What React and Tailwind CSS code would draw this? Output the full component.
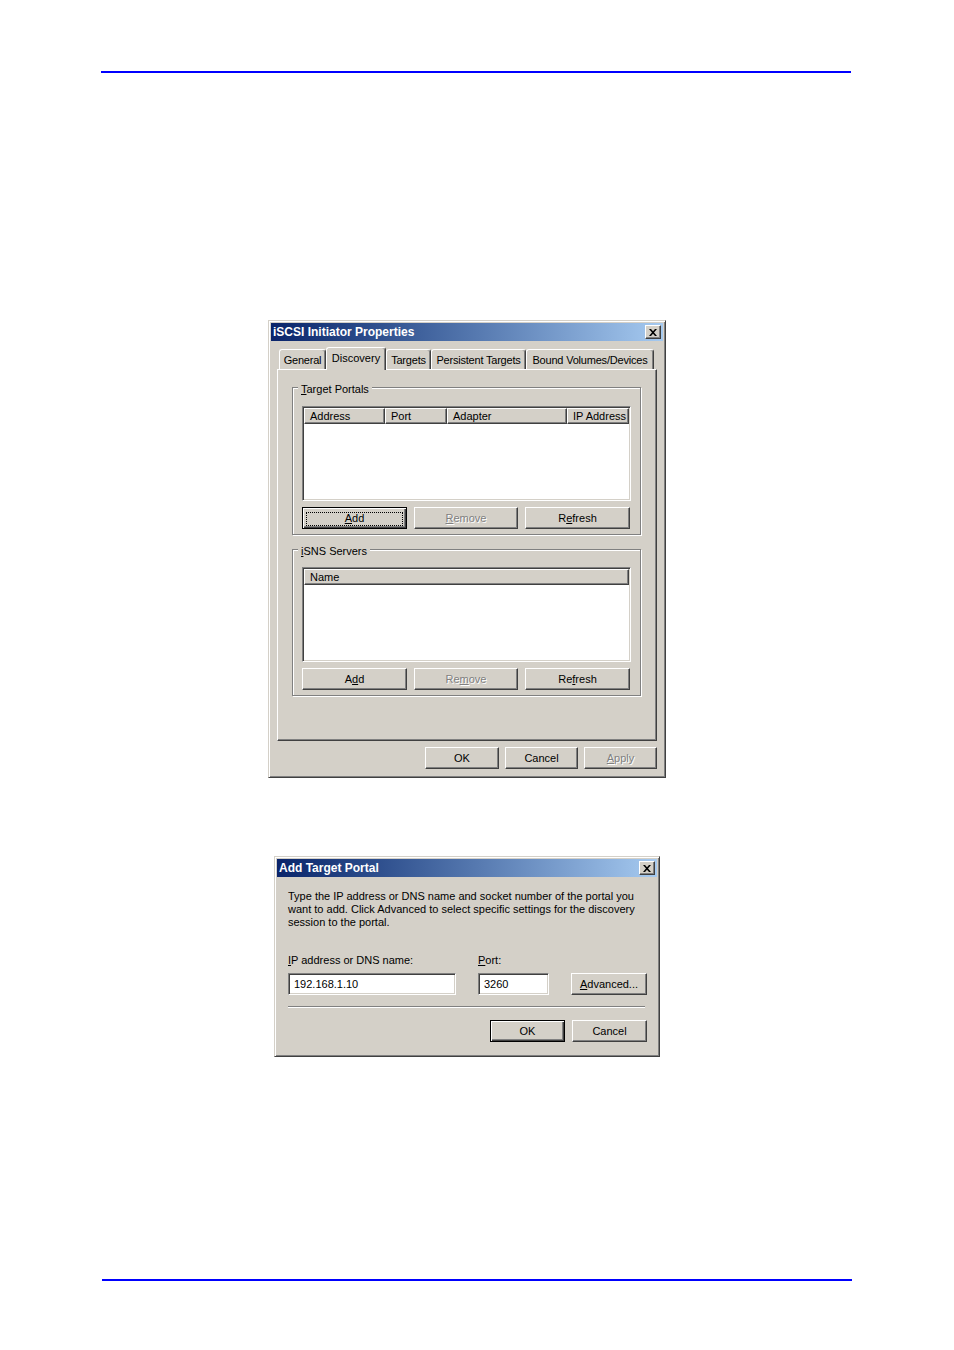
import React from 'react'

// Classic Windows 2000 look: #d4d0c8 face, white / #808080 / #404040 bevels
const RAISED =
  'border border-t-white border-l-white border-r-[#404040] border-b-[#404040] shadow-[inset_-1px_-1px_0_#808080]'
const SUNKEN =
  'border border-t-[#808080] border-l-[#808080] border-r-white border-b-white shadow-[inset_1px_1px_0_#404040,inset_-1px_-1px_0_#d4d0c8]'
const DISABLED = 'text-[#808080] [text-shadow:1px_1px_0_#fff]'

function U({ children }) {
  return <span className="underline decoration-1 underline-offset-[1px]">{children}</span>
}

function CloseBox() {
  return (
    <div className={`mr-[2px] flex h-[14px] w-[16px] items-center justify-center bg-[#d4d0c8] ${RAISED}`}>
      <svg width="8" height="7" viewBox="0 0 8 7">
        <path d="M0 0h2l2 2.2L6 0h2L5 3.5 8 7H6L4 4.8 2 7H0l3-3.5z" fill="#000" />
      </svg>
    </div>
  )
}

function TitleBar({ title }) {
  return (
    <div className="flex h-[18px] items-center justify-between bg-gradient-to-r from-[#0a246a] to-[#a6caf0] pl-[2px]">
      <span className="text-[12px] font-bold leading-[14px] text-white">{title}</span>
      <CloseBox />
    </div>
  )
}

function Button({ w, children, disabled, isDefault, focused }) {
  const edge = isDefault
    ? 'border border-black shadow-[inset_1px_1px_0_#fff,inset_-1px_-1px_0_#404040,inset_-2px_-2px_0_#808080]'
    : RAISED
  return (
    <div
      className={`flex h-[22px] items-center justify-center bg-[#d4d0c8] px-[3px] pt-[1px] text-[11px] leading-[13px] ${w} ${edge} ${
        disabled ? DISABLED : 'text-black'
      }`}
    >
      {focused ? (
        <span className="flex h-[14px] w-full items-center justify-center border border-dotted border-black">
          {children}
        </span>
      ) : (
        children
      )}
    </div>
  )
}

function ListView({ columns }) {
  return (
    <div className={`h-[95px] w-[329px] bg-white p-[1px] ${SUNKEN}`}>
      <div className="flex">
        {columns.map((c) => (
          <div
            key={c.label}
            className={`h-[16px] bg-[#d4d0c8] pl-[5px] text-[11px] leading-[14px] ${c.w} ${RAISED}`}
          >
            {c.label}
          </div>
        ))}
      </div>
    </div>
  )
}

function Group({ label, className, children }) {
  return (
    <div
      className={`relative ml-[14px] w-[349px] border border-[#808080] pl-[9px] shadow-[inset_1px_1px_0_#fff,1px_1px_0_#fff] ${className}`}
    >
      <span className="absolute -top-[5px] left-[5px] bg-[#d4d0c8] px-[3px] text-[11px] leading-[13px]">
        {label}
      </span>
      {children}
    </div>
  )
}

const TABS = [
  { label: 'General', w: 'w-[47px]' },
  { label: 'Discovery', w: 'w-[60px]', active: true },
  { label: 'Targets', w: 'w-[45px]' },
  { label: 'Persistent Targets', w: 'w-[95px]' },
  { label: 'Bound Volumes/Devices', w: 'w-[128px]' },
]

function Tabs() {
  return (
    <div className="ml-[2px] flex h-[22px] items-end">
      {TABS.map((t) =>
        t.active ? (
          <div
            key={t.label}
            className={`relative z-10 -mb-[1px] flex h-[23px] justify-center rounded-t-[3px] border-t border-l border-r border-t-white border-l-white border-r-[#404040] bg-[#d4d0c8] pt-[4px] text-[11px] leading-[13px] shadow-[inset_-1px_0_0_#808080] ${t.w}`}
          >
            {t.label}
          </div>
        ) : (
          <div
            key={t.label}
            className={`flex h-[20px] justify-center rounded-t-[3px] border-t border-l border-r border-t-white border-l-white border-r-[#404040] pt-[4px] text-[11px] leading-[13px] tracking-[-0.2px] shadow-[inset_-1px_0_0_#808080] ${t.w}`}
          >
            {t.label}
          </div>
        ),
      )}
    </div>
  )
}

function Frame({ className, children }) {
  return (
    <div
      className={`flex flex-col border border-t-[#d4d0c8] border-l-[#d4d0c8] border-r-[#404040] border-b-[#404040] bg-[#d4d0c8] p-[2px] shadow-[inset_1px_1px_0_#fff,inset_-1px_-1px_0_#808080] ${className}`}
    >
      {children}
    </div>
  )
}

function InitiatorDialog() {
  return (
    <Frame className="ml-[268px] mt-[247px] h-[458px] w-[398px]">
      <TitleBar title="iSCSI Initiator Properties" />
      <div className="flex flex-col px-[6px] pt-[6px]">
        <Tabs />
        <div className={`h-[372px] ${RAISED}`}>
          <Group
            className="mt-[17px] h-[148px] pt-[18px]"
            label={
              <>
                <U>T</U>arget Portals
              </>
            }
          >
            <ListView
              columns={[
                { label: 'Address', w: 'w-[81px]' },
                { label: 'Port', w: 'w-[62px]' },
                { label: 'Adapter', w: 'w-[120px]' },
                { label: 'IP Address', w: 'w-[62px]' },
              ]}
            />
            <div className="mt-[6px] flex gap-[7px]">
              <Button w="w-[105px]" isDefault focused>
                <U>A</U>dd
              </Button>
              <Button w="w-[104px]" disabled>
                <U>R</U>emove
              </Button>
              <Button w="w-[105px]">
                R<U>e</U>fresh
              </Button>
            </div>
          </Group>
          <Group
            className="mt-[14px] h-[147px] pt-[17px]"
            label={
              <>
                <U>i</U>SNS Servers
              </>
            }
          >
            <ListView columns={[{ label: 'Name', w: 'w-[325px]' }]} />
            <div className="mt-[6px] flex gap-[7px]">
              <Button w="w-[105px]">
                A<U>d</U>d
              </Button>
              <Button w="w-[104px]" disabled>
                Re<U>m</U>ove
              </Button>
              <Button w="w-[105px]">
                Re<U>f</U>resh
              </Button>
            </div>
          </Group>
        </div>
        <div className="mt-[6px] flex justify-end gap-[6px]">
          <Button w="w-[74px]">OK</Button>
          <Button w="w-[73px]">Cancel</Button>
          <Button w="w-[73px]" disabled>
            <U>A</U>pply
          </Button>
        </div>
      </div>
    </Frame>
  )
}

function AddPortalDialog() {
  return (
    <Frame className="ml-[274px] mt-[78px] h-[201px] w-[386px]">
      <TitleBar title="Add Target Portal" />
      <div className="flex flex-col pl-[11px] pr-[10px]">
        <p className="mt-[13px] whitespace-nowrap text-[11px] leading-[13px]">
          Type the IP address or DNS name and socket number of the portal you
          <br />
          want to add. Click Advanced to select specific settings for the discovery
          <br />
          session to the portal.
        </p>
        <div className="mt-[25px] flex items-end">
          <div className="flex w-[168px] flex-col gap-[6px]">
            <span className="text-[11px] leading-[13px]">
              <U>I</U>P address or DNS name:
            </span>
            <div className={`flex h-[22px] items-center bg-white pl-[5px] text-[11px] ${SUNKEN}`}>192.168.1.10</div>
          </div>
          <div className="ml-[22px] flex w-[71px] flex-col gap-[6px]">
            <span className="text-[11px] leading-[13px]">
              <U>P</U>ort:
            </span>
            <div className={`flex h-[22px] items-center bg-white pl-[5px] text-[11px] ${SUNKEN}`}>3260</div>
          </div>
          <div className="ml-[22px]">
            <Button w="w-[76px]">
              <U>A</U>dvanced...
            </Button>
          </div>
        </div>
        <div className="mt-[11px] h-[2px] w-[357px] border-t border-b border-t-[#808080] border-b-white" />
        <div className="mt-[12px] flex justify-end gap-[7px]">
          <Button w="w-[75px]" isDefault>
            OK
          </Button>
          <Button w="w-[75px]">Cancel</Button>
        </div>
      </div>
    </Frame>
  )
}

export default function App() {
  return (
    <div className="flex h-[1350px] w-[954px] flex-col bg-white font-['Liberation_Sans',Arial,sans-serif] text-black">
      <div className="ml-[101px] mt-[71px] h-[2px] w-[750px] bg-[#0000ff]" />
      <InitiatorDialog />
      <AddPortalDialog />
      <div className="ml-[102px] mt-[222px] h-[2px] w-[750px] bg-[#0000ff]" />
    </div>
  )
}
